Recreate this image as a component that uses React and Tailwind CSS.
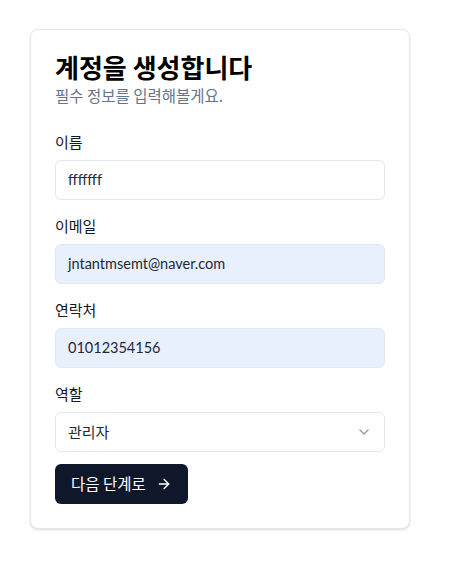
import { ArrowRight, ChevronDown } from "lucide-react";

const font = { fontFamily: '"Noto Sans CJK KR", Inter, sans-serif' };
const latin = { fontFamily: 'Lato, "Noto Sans CJK KR", sans-serif' };

function Field({ label, children }) {
  return (
    <div className="flex flex-col gap-2">
      <label className="text-[15px] text-[#111827] leading-5">{label}</label>
      {children}
    </div>
  );
}

function Input({ value, filled }) {
  return (
    <div
      style={latin}
      className={
        "h-10 w-full rounded-md border border-[#e2e8f0] px-3 flex items-center text-[14.5px] text-[#1f2937] " +
        (filled ? "bg-[#e8f0fe]" : "bg-white")
      }
    >
      {value}
    </div>
  );
}

export default function App() {
  return (
    <div className="min-h-[565px] bg-white pt-[29px] pl-[30px]" style={font}>
      <div className="w-[380px] rounded-lg border border-[#e2e8f0] bg-white p-6 shadow-sm">
        <div className="mb-[27px]">
          <h1 className="text-[26px] font-bold text-black leading-[26px]">계정을 생성합니다</h1>
          <p className="mt-[5px] text-[15.5px] text-[#64748b] leading-5">필수 정보를 입력해볼게요.</p>
        </div>
        <div className="flex flex-col gap-4">
          <Field label="이름">
            <Input value="fffffff" />
          </Field>
          <Field label="이메일">
            <Input value="jntantmsemt@naver.com" filled />
          </Field>
          <Field label="연락처">
            <Input value="01012354156" filled />
          </Field>
          <Field label="역할">
            <div className="h-10 w-full rounded-md border border-[#e2e8f0] bg-white px-3 flex items-center justify-between text-[15px] text-[#1f2937]">
              <span>관리자</span>
              <ChevronDown size={16} className="text-[#64748b] opacity-70" />
            </div>
          </Field>
        </div>
        <button className="mt-3 h-10 rounded-md bg-[#0f172a] px-4 flex items-center gap-[10px] text-[15.5px] text-white">
          다음 단계로
          <ArrowRight size={16} />
        </button>
      </div>
    </div>
  );
}
